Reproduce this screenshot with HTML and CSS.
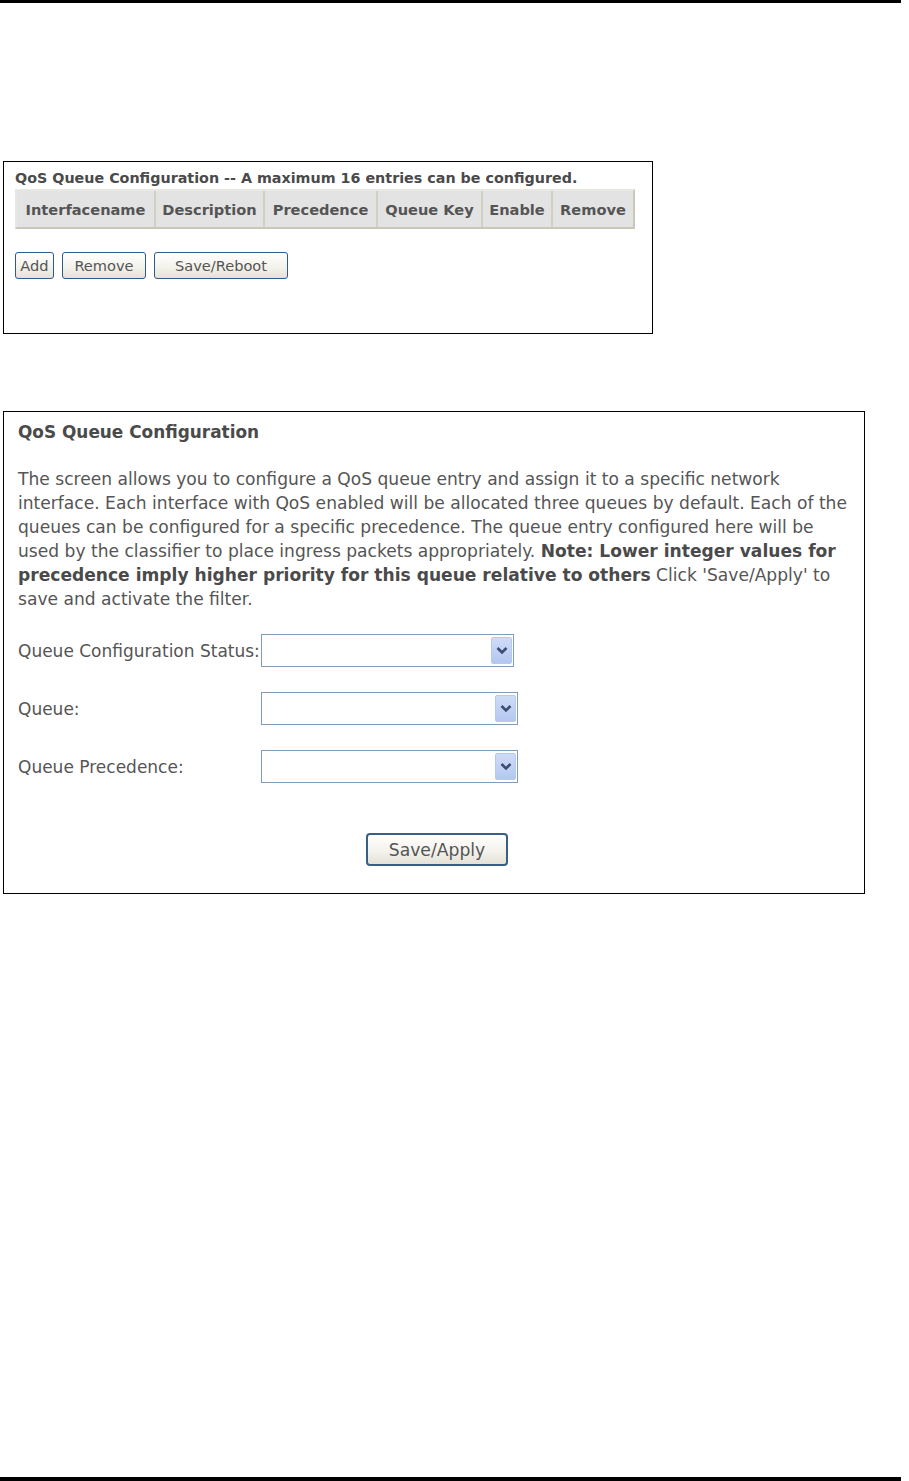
FILE: index.html
```html
<!DOCTYPE html>
<html>
<head>
<meta charset="utf-8">
<link rel="stylesheet" href="styles.css">
</head>
<body>
<div class="rule rule-top"></div>

<div class="shot shot-list">
  <div class="list-title">QoS Queue Configuration -- A maximum 16 entries can be configured.</div>
  <table class="qtable">
    <tr>
      <th class="c1">Interfacename</th>
      <th class="c2">Description</th>
      <th class="c3">Precedence</th>
      <th class="c4">Queue Key</th>
      <th class="c5">Enable</th>
      <th class="c6">Remove</th>
    </tr>
  </table>
  <div class="btn-row">
    <button class="btn b-add">Add</button>
    <button class="btn b-remove">Remove</button>
    <button class="btn b-save">Save/Reboot</button>
  </div>
</div>

<div class="shot shot-form">
  <div class="form-title">QoS Queue Configuration</div>
  <p class="desc">The screen allows you to configure a QoS queue entry and assign it to a specific network<br>interface. Each interface with QoS enabled will be allocated three queues by default. Each of the<br>queues can be configured for a specific precedence. The queue entry configured here will be<br>used by the classifier to place ingress packets appropriately. <b>Note: Lower integer values for<br>precedence imply higher priority for this queue relative to others</b> Click 'Save/Apply' to<br>save and activate the filter.</p>
  <div class="form-grid">
    <div class="lbl">Queue Configuration Status:</div>
    <div class="sel sel-a"><span class="sel-val"></span><span class="sel-arrow"><svg width="12" height="9" viewBox="0 0 12 9"><path d="M1.5 2 L6 6.5 L10.5 2" fill="none" stroke="#3b4d74" stroke-width="2.6"/></svg></span></div>
    <div class="lbl">Queue:</div>
    <div class="sel sel-b"><span class="sel-val"></span><span class="sel-arrow"><svg width="12" height="9" viewBox="0 0 12 9"><path d="M1.5 2 L6 6.5 L10.5 2" fill="none" stroke="#3b4d74" stroke-width="2.6"/></svg></span></div>
    <div class="lbl">Queue Precedence:</div>
    <div class="sel sel-b"><span class="sel-val"></span><span class="sel-arrow"><svg width="12" height="9" viewBox="0 0 12 9"><path d="M1.5 2 L6 6.5 L10.5 2" fill="none" stroke="#3b4d74" stroke-width="2.6"/></svg></span></div>
  </div>
  <div class="apply-row">
    <button class="btn b-apply">Save/Apply</button>
  </div>
</div>

<div class="spacer"></div>
<div class="rule rule-bottom"></div>
</body>
</html>
```

FILE: styles.css
```css
html, body {
  margin: 0;
  padding: 0;
  background: #ffffff;
}
body {
  width: 909px;
  height: 1481px;
  display: flex;
  flex-direction: column;
  font-family: "DejaVu Sans", sans-serif;
  color: #555555;
}
.rule {
  width: 901px;
  background: #000000;
  flex: none;
}
.rule-top { height: 3px; }
.rule-bottom { height: 4px; }
.spacer { flex: 1; }

.shot {
  margin-left: 3px;
  border: 1px solid #000000;
  box-sizing: border-box;
  flex: none;
}
.shot-list {
  margin-top: 158px;
  width: 650px;
  height: 173px;
  padding: 8px 0 0 11px;
}
.list-title {
  font-weight: bold;
  font-size: 14.3px;
  line-height: 17px;
  color: #4a4a4a;
  white-space: nowrap;
}
.qtable {
  border-collapse: separate;
  border-spacing: 0;
  border: 2px solid;
  border-color: #e8e8e0 #c9c7b8 #c9c7b8 #e8e8e0;
  background: #e3e3e3;
  margin-top: 2px;
}
.qtable th {
  height: 36px;
  padding: 0;
  font-size: 14.6px;
  font-weight: bold;
  color: #555555;
  text-align: center;
  border-right: 2px solid #d2d0c2;
  white-space: nowrap;
}
.qtable th:last-child { border-right: none; }
.c1 { width: 137px; }
.c2 { width: 107px; }
.c3 { width: 111px; }
.c4 { width: 103px; }
.c5 { width: 68px; }
.c6 { width: 80px; }

.btn-row {
  display: flex;
  gap: 8px;
  margin-top: 23px;
}
.btn {
  font-family: inherit;
  font-size: 14.6px;
  color: #555555;
  background: linear-gradient(#ffffff, #f2f1ea 60%, #e4e2d6);
  border: 1px solid #2f5a8a;
  border-radius: 3px;
  padding: 0;
  height: 27px;
  box-sizing: border-box;
  white-space: nowrap;
}
.b-add { width: 39px; }
.b-remove { width: 84px; }
.b-save { width: 134px; }

.shot-form {
  margin-top: 77px;
  width: 862px;
  height: 483px;
  padding: 9px 14px 0 14px;
}
.form-title {
  font-weight: bold;
  font-size: 16.9px;
  line-height: 22px;
  color: #4a4a4a;
}
.desc {
  margin: 24px 0 0 0;
  font-size: 17.1px;
  line-height: 24px;
  white-space: nowrap;
}
.desc b { color: #4a4a4a; }

.form-grid {
  display: grid;
  grid-template-columns: 243px auto;
  grid-auto-rows: 33px;
  row-gap: 25px;
  align-items: center;
  margin-top: 23px;
  justify-items: start;
}
.lbl {
  font-size: 17px;
  white-space: nowrap;
}
.sel {
  display: flex;
  height: 33px;
  box-sizing: border-box;
  border: 1px solid #7f9db9;
  background: #ffffff;
  padding: 1px;
}
.sel-a { width: 253px; }
.sel-b { width: 257px; }
.sel-val { flex: 1; }
.sel-arrow {
  width: 21px;
  height: 27px;
  align-self: center;
  background: linear-gradient(#cfdcf7, #b3c7f0);
  border: 1px solid #b8c9ee;
  box-sizing: border-box;
  border-radius: 2px;
  display: flex;
  align-items: center;
  justify-content: center;
}

.apply-row {
  display: flex;
  margin-top: 50px;
  padding-left: 348px;
}
.b-apply {
  width: 142px;
  height: 33px;
  font-size: 17.2px;
  border-width: 2px;
  border-color: #3a5f86;
  border-radius: 4px;
}
```
